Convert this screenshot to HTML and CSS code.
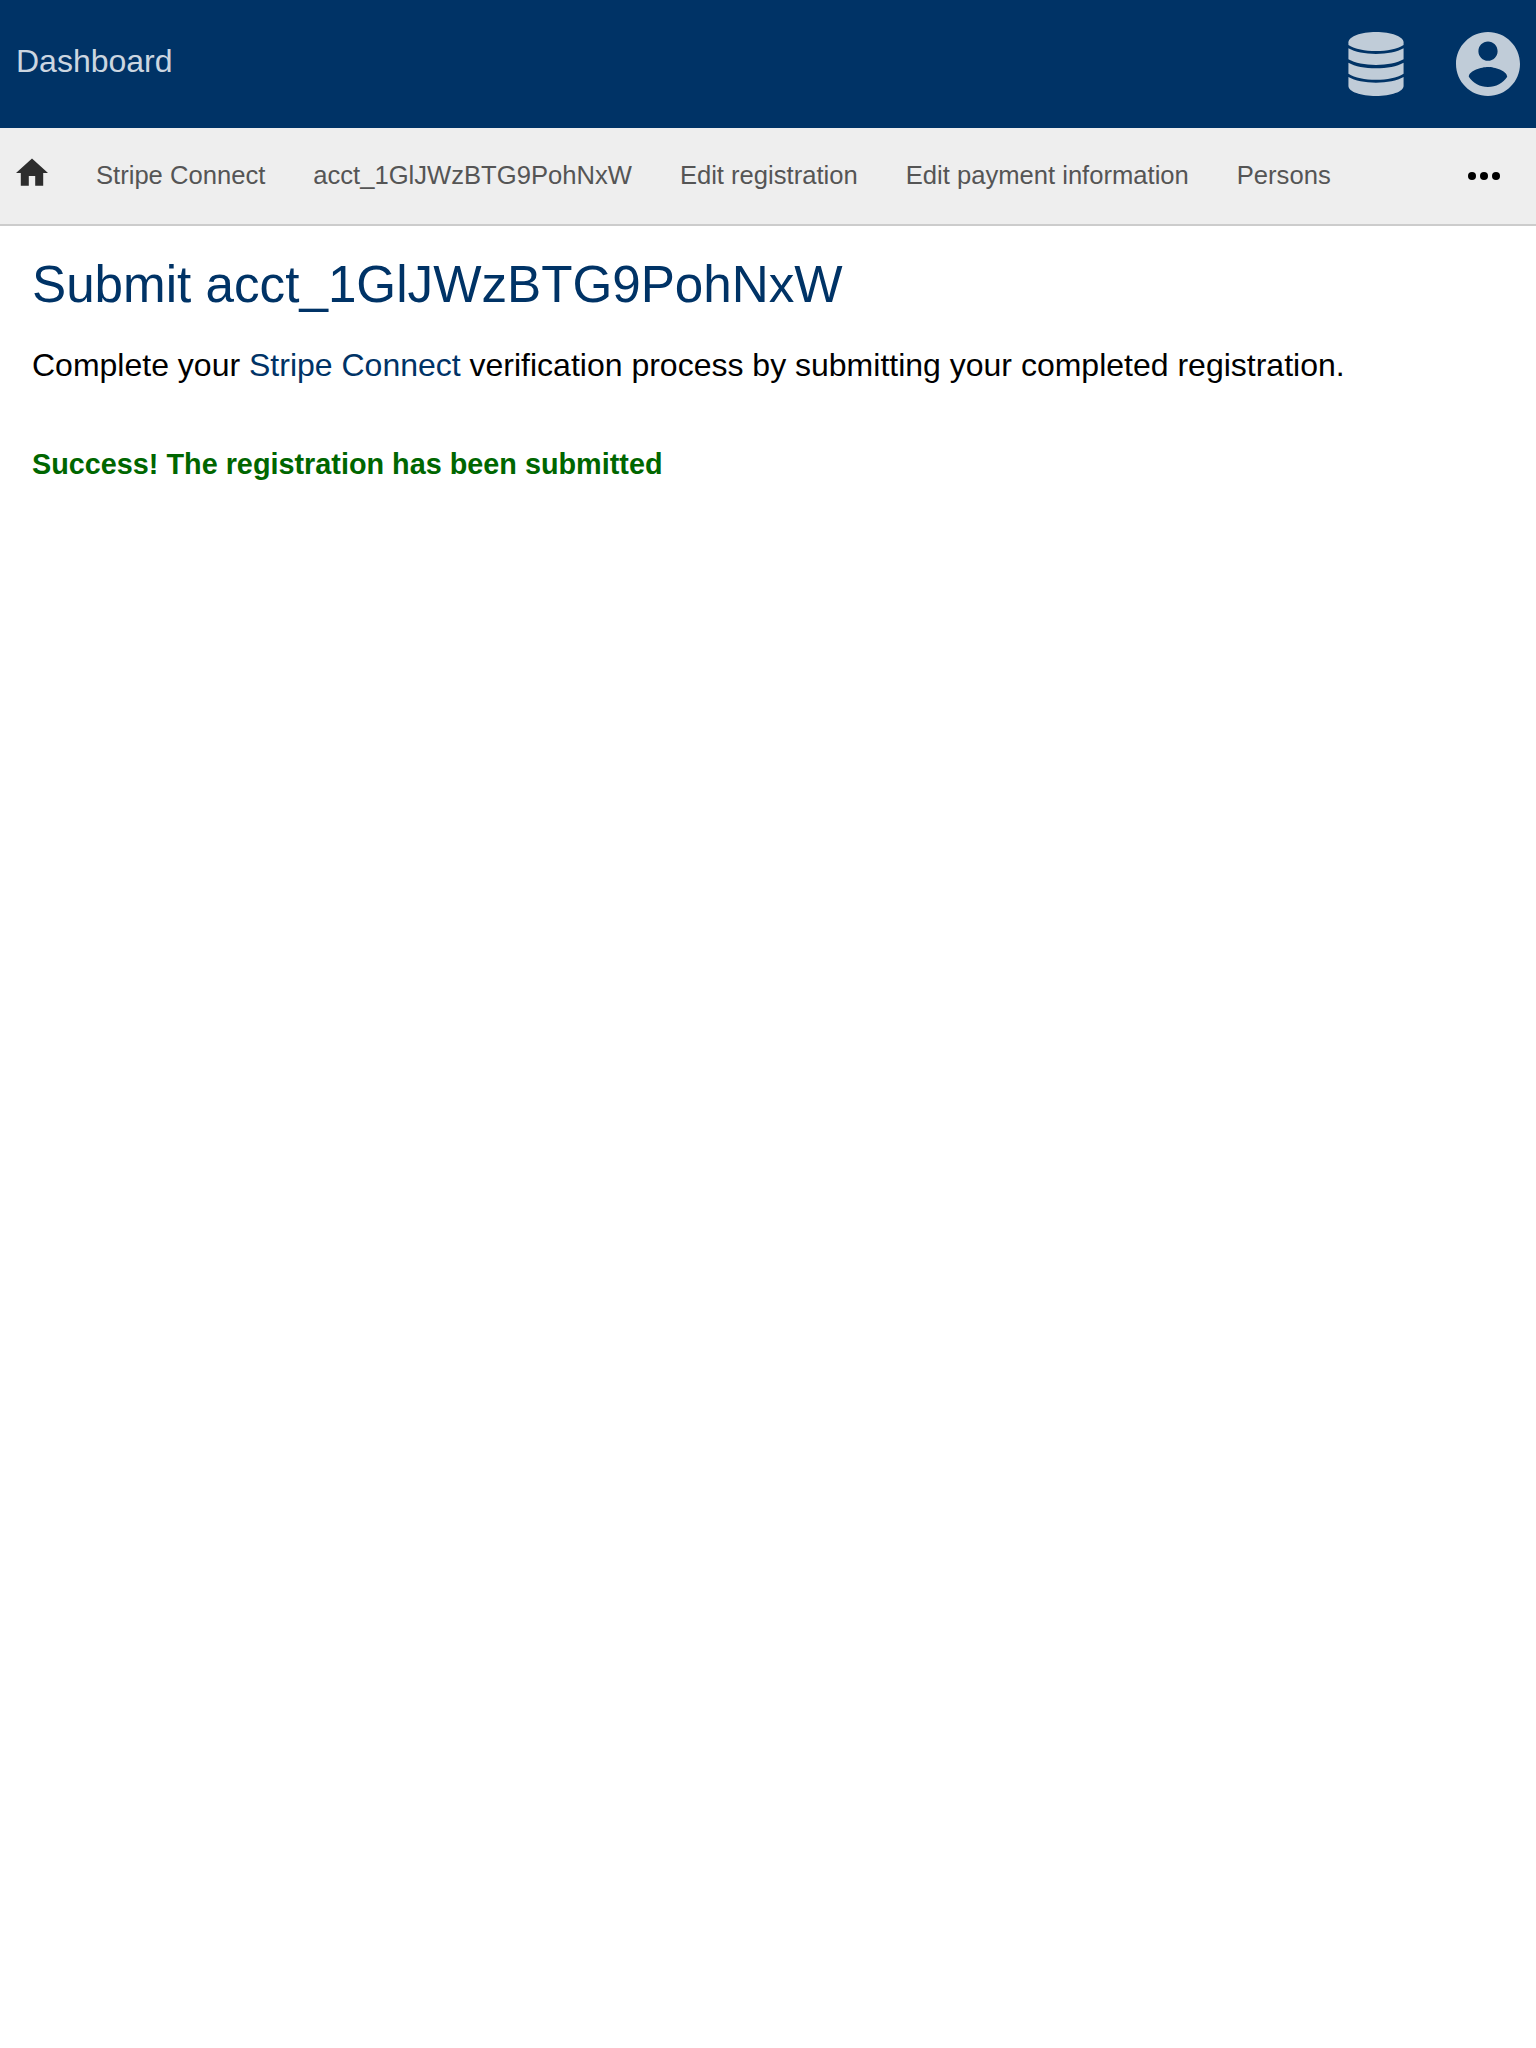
FILE: index.html
```html
<!DOCTYPE html>
<html lang="en">
<head>
<meta charset="utf-8">
<title>Submit registration</title>
<link rel="stylesheet" href="styles.css">
</head>
<body>
<header class="header">
  <a class="brand">Dashboard</a>
  <div class="header-icons">
    <svg class="icon-database" viewBox="-1.3 0 170.6 192" preserveAspectRatio="none">
      <path d="M84 0C130 0 168 14 168 31V39C148 51 118 57 84 57S20 51 0 39V31C0 14 38 0 84 0Z"/>
      <path d="M0 49C20 60 50 66 84 66S148 60 168 49V82C148 93 118 99 84 99S20 93 0 82Z"/>
      <path d="M0 92C20 103 50 109 84 109S148 103 168 92V125C148 137 118 143 84 143S20 137 0 125Z"/>
      <path d="M0 135C20 146 50 152 84 152S148 146 168 135V162C168 179 130 192 84 192S0 179 0 162Z"/>
    </svg>
    <svg class="icon-account" viewBox="2 2 20 20">
      <path d="M12 2C6.48 2 2 6.48 2 12s4.48 10 10 10 10-4.48 10-10S17.52 2 12 2zm0 3c1.66 0 3 1.34 3 3s-1.34 3-3 3-3-1.34-3-3 1.34-3 3-3zm0 14.2c-2.5 0-4.71-1.28-6-3.22.03-1.99 4-3.08 6-3.08 1.99 0 5.97 1.09 6 3.08-1.29 1.94-3.5 3.22-6 3.22z"/>
    </svg>
  </div>
</header>
<nav class="nav">
  <svg class="icon-home" viewBox="2 2.7 20 17.5"><path d="M10 20v-6h4v6h5v-8h3L12 3 2 12h3v8z"/></svg>
  <a>Stripe Connect</a>
  <a>acct_1GlJWzBTG9PohNxW</a>
  <a>Edit registration</a>
  <a>Edit payment information</a>
  <a>Persons</a>
  <svg class="icon-more" viewBox="0 0 32 8"><circle cx="4" cy="4" r="4"/><circle cx="16" cy="4" r="4"/><circle cx="28" cy="4" r="4"/></svg>
</nav>
<main class="content">
  <h1>Submit acct_1GlJWzBTG9PohNxW</h1>
  <p>Complete your <a>Stripe Connect</a> verification process by submitting your completed registration.</p>
  <div class="success">Success! The registration has been submitted</div>
</main>
</body>
</html>
```
FILE: styles.css
```css
body {
  margin: 0;
  background: #fff;
  color: #000;
  font-family: "Liberation Sans", Arial, sans-serif;
  font-size: 32px;
}

.header {
  box-sizing: border-box;
  display: flex;
  align-items: center;
  justify-content: space-between;
  height: 128px;
  padding: 0 16px;
  background: #003366;
}

.brand {
  padding-bottom: 6px;
  color: #ccd6e0;
  line-height: 40px;
}

.header-icons {
  display: flex;
  gap: 52px;
  fill: #c0ccd8;
}

.icon-database { width: 56px; height: 64px; }
.icon-account { width: 64px; height: 64px; }

.nav {
  display: flex;
  align-items: flex-start;
  gap: 48px;
  height: 96px;
  padding: 0 36px 0 16px;
  background: #eee;
  border-bottom: 2px solid #ccc;
}

.nav a {
  color: #555;
  font-size: 25.6px;
  line-height: 95px;
  white-space: nowrap;
}

.icon-home {
  width: 32px;
  height: 28px;
  margin-top: 30px;
  fill: #2d2d2d;
}

.icon-more {
  width: 32px;
  height: 8px;
  margin: 44px 0 0 auto;
}

.content {
  padding: 29px 32px;
}

h1 {
  margin: 0 0 30px;
  color: #003366;
  font-size: 51.2px;
  font-weight: 400;
  line-height: 60px;
}

p {
  margin: 0 0 61px;
  line-height: 40px;
}

p a {
  color: #003366;
}

.success {
  color: #006600;
  font-size: 28.8px;
  font-weight: 700;
  line-height: 36px;
}
```
